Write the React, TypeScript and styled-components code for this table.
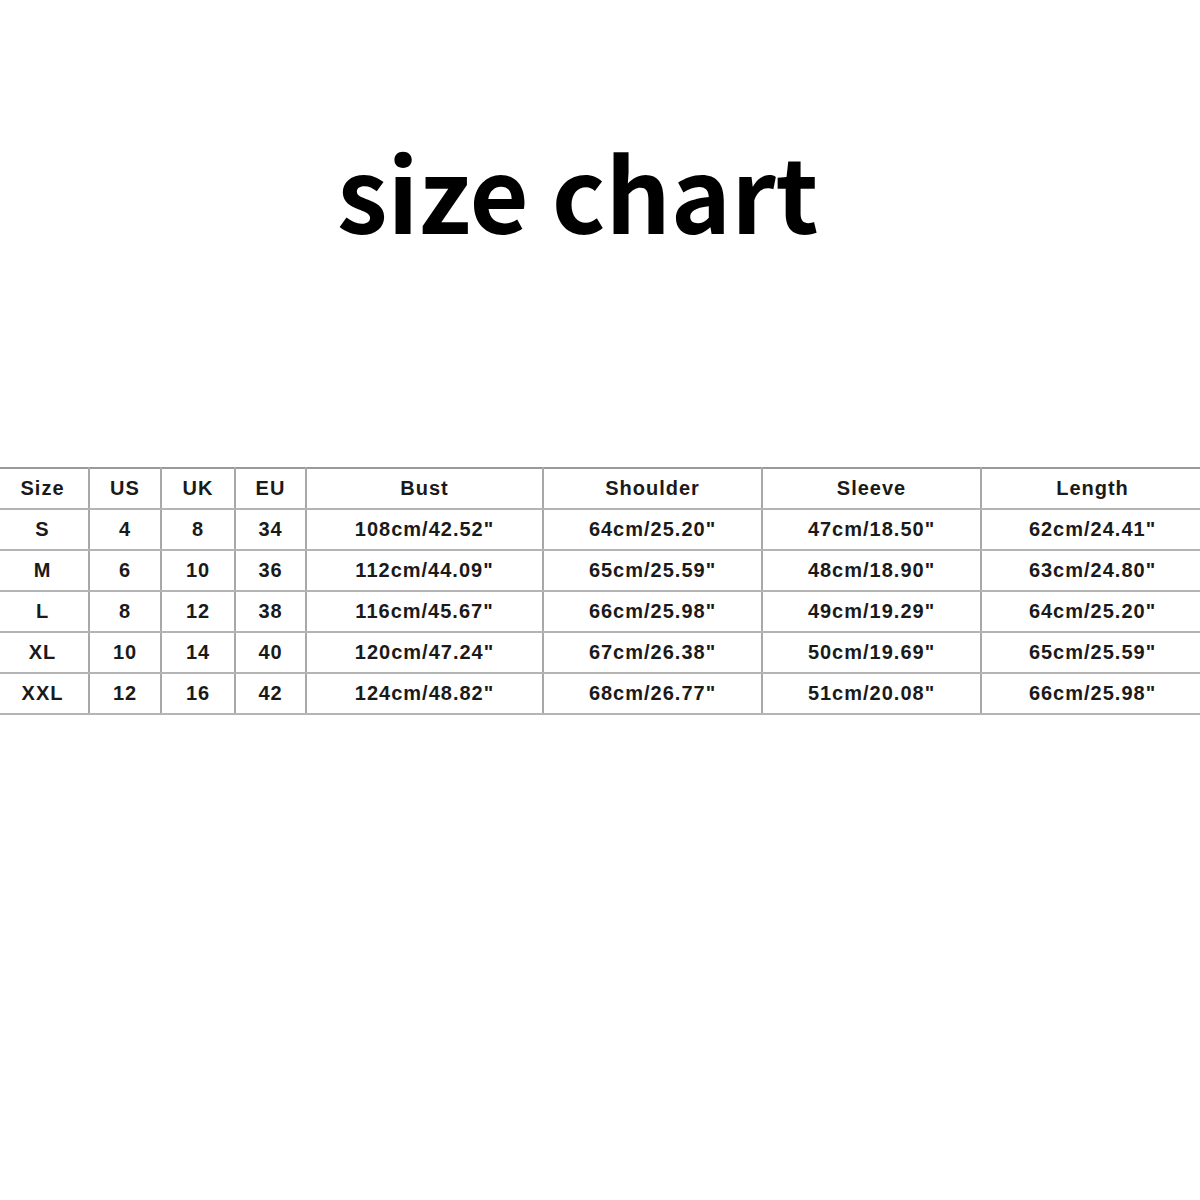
import styled, { createGlobalStyle } from 'styled-components';

const GlobalStyle = createGlobalStyle`
  html, body {
    margin: 0;
    padding: 0;
    background: #ffffff;
    overflow: hidden;
  }
`;

const Page = styled.main`
  width: 1200px;
  height: 1200px;
  display: flex;
  flex-direction: column;
  overflow: hidden;
`;

const Title = styled.h1`
  margin: 0;
  padding: 139px 0 0 337px;
  height: 467px;
  box-sizing: border-box;
  flex-shrink: 0;
  font-family: 'Noto Sans CJK SC', 'Noto Sans', sans-serif;
  font-weight: 700;
  font-size: 102px;
  line-height: 1;
  color: #000;
`;

const TableWrap = styled.section`
  position: relative;
  margin-left: -3px;
  width: 1206px;
`;

const Chart = styled.table`
  width: 1206px;
  border-collapse: collapse;
  table-layout: fixed;
  border-top: 2px solid #9a9a9a;
  border-bottom: 2px solid #9a9a9a;
  font-family: 'Liberation Sans', Arial, sans-serif;
  font-weight: 700;
  font-size: 20px;
  letter-spacing: 1px;
  color: #1a1a1a;
`;

const Cell = styled.td<{ $last?: boolean }>`
  height: 39px;
  padding: 0;
  text-align: center;
  vertical-align: middle;
  border-bottom: 2px solid #b4b4b4;
  border-right: ${(p) => (p.$last ? 'none' : '2px solid #a8a8a8')};
`;

const Mark = styled.span<{ $x: number; $y: number }>`
  position: absolute;
  left: ${(p) => p.$x}px;
  top: ${(p) => p.$y}px;
  font-family: 'Liberation Sans', Arial, sans-serif;
  font-weight: 700;
  font-size: 44px;
  color: rgba(0, 0, 0, 0.025);
  transform: rotate(-22deg);
  pointer-events: none;
  white-space: nowrap;
`;

const widths = [92, 72, 74, 71, 237, 219, 219, 222];

const header = ['Size', 'US', 'UK', 'EU', 'Bust', 'Shoulder', 'Sleeve', 'Length'];

const rows = [
  ['S', '4', '8', '34', '108cm/42.52"', '64cm/25.20"', '47cm/18.50"', '62cm/24.41"'],
  ['M', '6', '10', '36', '112cm/44.09"', '65cm/25.59"', '48cm/18.90"', '63cm/24.80"'],
  ['L', '8', '12', '38', '116cm/45.67"', '66cm/25.98"', '49cm/19.29"', '64cm/25.20"'],
  ['XL', '10', '14', '40', '120cm/47.24"', '67cm/26.38"', '50cm/19.69"', '65cm/25.59"'],
  ['XXL', '12', '16', '42', '124cm/48.82"', '68cm/26.77"', '51cm/20.08"', '66cm/25.98"'],
];

const marks = [
  { x: 10, y: -48, t: '010' },
  { x: 300, y: -50, t: '010' },
  { x: 575, y: -50, t: '010' },
  { x: 870, y: -45, t: '010' },
  { x: 30, y: 170, t: '0853' },
  { x: 320, y: 160, t: '0108' },
  { x: 600, y: 150, t: '0852' },
  { x: 930, y: 140, t: '0853' },
];

function App() {
  return (
    <Page>
      <GlobalStyle />
      <Title>size chart</Title>
      <TableWrap>
        <Chart>
          <colgroup>
            {widths.map((w, i) => (
              <col key={i} style={{ width: w }} />
            ))}
          </colgroup>
          <tbody>
            <tr>
              {header.map((h, i) => (
                <Cell key={h} $last={i === header.length - 1}>
                  {h}
                </Cell>
              ))}
            </tr>
            {rows.map((r) => (
              <tr key={r[0]}>
                {r.map((c, i) => (
                  <Cell key={i} $last={i === r.length - 1}>
                    {c}
                  </Cell>
                ))}
              </tr>
            ))}
          </tbody>
        </Chart>
        {marks.map((m, i) => (
          <Mark key={i} $x={m.x} $y={m.y}>
            {m.t}
          </Mark>
        ))}
      </TableWrap>
    </Page>
  );
}

export default App;
